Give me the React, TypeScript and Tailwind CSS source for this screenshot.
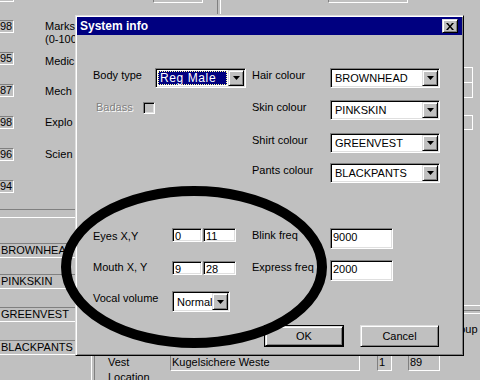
import { clsx } from "clsx";

// win95 bevels
const sunken =
  "border border-t-[#808080] border-l-[#808080] border-r-white border-b-white shadow-[inset_1px_1px_#000,inset_-1px_-1px_#dfdfdf]";
const raised =
  "border border-t-[#dfdfdf] border-l-[#dfdfdf] border-r-black border-b-black shadow-[inset_1px_1px_#fff,inset_-1px_-1px_#808080]";
const well = "border border-t-[#808080] border-l-[#808080] border-r-white border-b-white";

function DropArrow({ className }: { className?: string }) {
  return (
    <div className={clsx("flex shrink-0 items-center justify-center bg-[#c0c0c0]", raised, className)}>
      <svg width="7" height="4" viewBox="0 0 7 4">
        <path d="M0 0h7L3.5 4z" fill="#000" />
      </svg>
    </div>
  );
}

function Combo({ value, className }: { value: string; className?: string }) {
  return (
    <div className={clsx("flex bg-white p-[1px]", sunken, className)}>
      <span className="flex-1 self-center whitespace-nowrap pl-[3px] leading-[12px]">{value}</span>
      <DropArrow className="w-[16px]" />
    </div>
  );
}

function Field({ value, className }: { value: string; className?: string }) {
  return (
    <div className={clsx("bg-white pl-[2px] pt-[1px] leading-[12px]", sunken, className)}>{value}</div>
  );
}

const stats = [
  { n: "98", label: "Marks", sub: "(0-100", mt: "mt-0" },
  { n: "95", label: "Medic", mt: "mt-[3px]" },
  { n: "87", label: "Mech", mt: "mt-[1px]" },
  { n: "98", label: "Explo", mt: "mt-0" },
  { n: "96", label: "Scien", mt: "mt-0" },
];

const colours = [
  { label: "Hair colour", value: "BROWNHEAD", mt: "mt-0" },
  { label: "Skin colour", value: "PINKSKIN", mt: "mt-[12px]" },
  { label: "Shirt colour", value: "GREENVEST", mt: "mt-[13px]" },
  { label: "Pants colour", value: "BLACKPANTS", mt: "mt-[10px]" },
];

export default function App() {
  return (
    <div className="relative h-[380px] w-[480px] overflow-hidden bg-[#c0c0c0] font-['Liberation_Sans',Arial,sans-serif] text-[11px] text-black">
      {/* editor window behind the dialog */}
      <div className="flex h-full flex-col">
        <div className="flex h-[20px] items-start">
          <div className="h-[2px] w-[14px] border-b border-r border-white" />
          <div className="ml-[139px] h-[3px] w-[50px] border-x border-b border-l-[#808080] border-r-white border-b-white" />
          <div className="ml-[14px] h-[14px] w-[4px] border-x border-l-[#808080] border-r-white" />
          <div className="ml-[107px] h-[3px] w-[80px] border-x border-b border-l-[#808080] border-r-white border-b-white" />
        </div>

        <div className="flex h-[335px]">
          <div className="flex w-[110px] flex-col">
            {stats.map((s, i) => (
              <div key={i} className="flex h-[32px] items-start">
                <div className={clsx("h-[13px] w-[14px] border-l-0 pr-[1px] text-right leading-[11px]", well)}>{s.n}</div>
                <div className={clsx("ml-[31px] leading-[13px]", s.mt)}>
                  <div>{s.label}</div>
                  {s.sub && <div>{s.sub}</div>}
                </div>
              </div>
            ))}
            <div className="flex h-[29px] items-start">
              <div className={clsx("h-[13px] w-[14px] border-l-0 pr-[1px] text-right leading-[11px]", well)}>94</div>
            </div>
            <div className="h-[8px] border-t border-[#808080]" />
            <div className="h-[1px] bg-white" />
            {["BROWNHEAD", "PINKSKIN", "GREENVEST", "BLACKPANTS"].map((v, i) => (
              <div
                key={v}
                className={clsx(
                  "h-[15px] border-y border-t-[#808080] border-b-white pl-[1px] leading-[13px]",
                  ["mt-[25px]", "mt-[16px]", "mt-[18px]", "mt-[18px]"][i],
                )}
              >
                {v}
              </div>
            ))}
          </div>

          <div className="ml-auto flex w-[17px] flex-col">
            <div className="mt-[47px] h-[16px] w-[10px] border border-white" />
            <div className="h-[15px] w-[10px] border-x border-b border-white" />
            <div className="mt-[17px] h-[15px] w-[10px] border border-white" />
            <div className="mt-[175px] h-[5px] border-t border-white" />
            <div className="h-[3px] border-t border-[#808080]" />
            <div className="h-[1px] bg-white" />
            <div className="ml-[-16px] mt-[9px] whitespace-nowrap leading-[13px]">Group</div>
          </div>
        </div>

        <div className="flex h-[25px] items-start">
          <div className="ml-[91px] h-full w-[4px] border-x border-l-white border-r-[#808080]" />
          <div className="ml-[13px] w-[62px] leading-[15px]">
            <div>Vest</div>
            <div>Location</div>
          </div>
          <div className="h-[16px] w-[190px] border-b border-l border-r border-l-[#808080] border-b-white border-r-white pl-[1px] pt-[1px] leading-[13px]">
            Kugelsichere Weste
          </div>
          <div className="ml-[17px] h-[16px] w-[15px] border-b border-l border-r border-l-[#808080] border-b-white border-r-white pl-[1px] pt-[1px] leading-[13px]">
            1
          </div>
          <div className="ml-[16px] h-[16px] w-[32px] border-b border-l border-r border-l-[#808080] border-b-white border-r-white pl-[1px] pt-[1px] leading-[13px]">
            89
          </div>
        </div>
      </div>

      {/* dialog window */}
      <div className={clsx("absolute left-[75px] top-[15px] flex h-[341px] w-[389px] flex-col bg-[#c0c0c0] p-[1px]", raised)}>
        <div className="flex h-[18px] items-center justify-between bg-[#000080] pl-[3px] pr-[4px]">
          <span className="text-[12px] font-bold leading-none text-white">System info</span>
          <div className={clsx("flex h-[14px] w-[16px] items-center justify-center bg-[#c0c0c0]", raised)}>
            <svg width="8" height="7" viewBox="0 0 8 7">
              <path d="M0 0h2l2 2.4L6 0h2L5 3.5 8 7H6L4 4.6 2 7H0l3-3.5z" fill="#000" />
            </svg>
          </div>
        </div>

        <div className="flex pl-[16px] pt-[33px]">
          <div className="flex w-[159px] flex-col">
            <div className="flex h-[20px] items-start">
              <span className="mt-[1px] w-[62px] leading-[12px]">Body type</span>
              <div className={clsx("flex h-[20px] w-[91px] bg-white p-[1px]", sunken)}>
                <div className="m-[1px] flex flex-1 items-center border border-dotted border-[#ffffa0] bg-[#000080] pl-[1px] text-[12px] tracking-[0.6px] text-white">
                  Reg Male
                </div>
                <DropArrow className="w-[16px]" />
              </div>
            </div>
            <div className="mt-[12px] flex items-start">
              <span className="ml-[3px] mt-[1px] w-[47px] leading-[12px] text-[#808080] [text-shadow:1px_1px_0_#fff]">Badass</span>
              <div className={clsx("mt-[2px] h-[12px] w-[12px] bg-[#c0c0c0]", sunken)} />
            </div>
          </div>
          <div className="flex flex-col">
            {colours.map((c) => (
              <div key={c.label} className={clsx("flex h-[20px] items-start", c.mt)}>
                <span className="mt-[1px] w-[78px] leading-[12px]">{c.label}</span>
                <Combo value={c.value} className="h-[20px] w-[110px]" />
              </div>
            ))}
          </div>
        </div>

        <div className="mt-[45px] flex pl-[16px]">
          <div className="flex w-[159px] flex-col">
            <div className="flex h-[14px] items-start">
              <span className="mt-[2px] w-[79px] leading-[12px]">Eyes X,Y</span>
              <Field value="0" className="h-[14px] w-[30px]" />
              <Field value="11" className="ml-[1px] h-[14px] w-[33px]" />
            </div>
            <div className="mt-[19px] flex h-[14px] items-start">
              <span className="w-[79px] leading-[12px]">Mouth X, Y</span>
              <Field value="9" className="h-[14px] w-[30px]" />
              <Field value="28" className="ml-[1px] h-[14px] w-[33px]" />
            </div>
            <div className="mt-[16px] flex h-[21px] items-start">
              <span className="mt-[1px] w-[79px] leading-[12px]">Vocal volume</span>
              <Combo value="Normal" className="h-[21px] w-[58px]" />
            </div>
          </div>
          <div className="flex flex-col">
            <div className="flex items-start">
              <span className="mt-[1px] w-[78px] leading-[12px]">Blink freq</span>
              <Field value="9000" className="h-[21px] w-[63px] pt-[2px] leading-[13px]" />
            </div>
            <div className="mt-[11px] flex items-start">
              <span className="mt-[1px] w-[78px] leading-[12px]">Express freq</span>
              <Field value="2000" className="h-[21px] w-[63px] pt-[2px] leading-[13px]" />
            </div>
          </div>
        </div>

        <div className="mt-[13px] flex gap-[16px] pl-[187px]">
          <div className="h-[22px] w-[80px] border border-black">
            <div className={clsx("flex h-full items-center justify-center bg-[#c0c0c0]", raised)}>OK</div>
          </div>
          <div className={clsx("flex h-[22px] w-[79px] items-center justify-center bg-[#c0c0c0]", raised)}>Cancel</div>
        </div>
      </div>

      {/* hand drawn circle over the screenshot */}
      <svg className="pointer-events-none absolute inset-0" width="480" height="380" viewBox="0 0 480 380">
        <ellipse cx="194" cy="267" rx="128" ry="76" fill="none" stroke="#000" strokeWidth="10" />
      </svg>
    </div>
  );
}
